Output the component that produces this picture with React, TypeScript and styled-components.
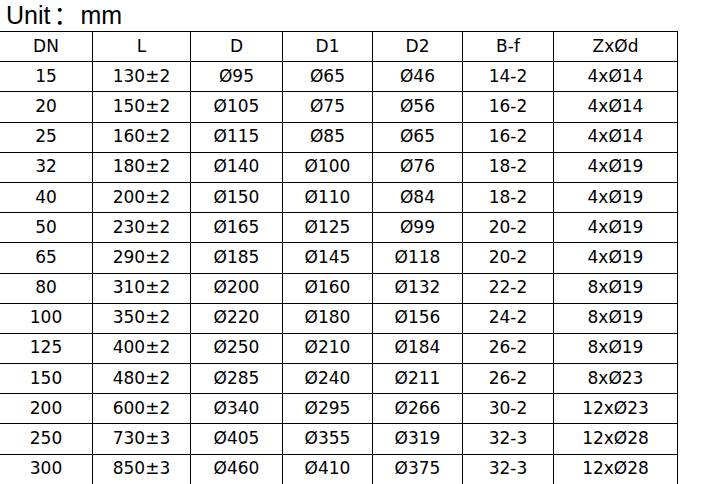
import React from "react";
import styled, { createGlobalStyle } from "styled-components";

const GlobalStyle = createGlobalStyle`
    html, body {
        margin: 0;
        padding: 0;
        background: #ffffff;
    }
    body {
        width: 708px;
        height: 484px;
        overflow: hidden;
    }
`;

const headers = ["DN", "L", "D", "D1", "D2", "B-f", "ZxØd"];
const columnWidths = [93, 98, 92, 90, 90, 91, 124];

const rows: string[][] = [
    ["15", "130±2", "Ø95", "Ø65", "Ø46", "14-2", "4xØ14"],
    ["20", "150±2", "Ø105", "Ø75", "Ø56", "16-2", "4xØ14"],
    ["25", "160±2", "Ø115", "Ø85", "Ø65", "16-2", "4xØ14"],
    ["32", "180±2", "Ø140", "Ø100", "Ø76", "18-2", "4xØ19"],
    ["40", "200±2", "Ø150", "Ø110", "Ø84", "18-2", "4xØ19"],
    ["50", "230±2", "Ø165", "Ø125", "Ø99", "20-2", "4xØ19"],
    ["65", "290±2", "Ø185", "Ø145", "Ø118", "20-2", "4xØ19"],
    ["80", "310±2", "Ø200", "Ø160", "Ø132", "22-2", "8xØ19"],
    ["100", "350±2", "Ø220", "Ø180", "Ø156", "24-2", "8xØ19"],
    ["125", "400±2", "Ø250", "Ø210", "Ø184", "26-2", "8xØ19"],
    ["150", "480±2", "Ø285", "Ø240", "Ø211", "26-2", "8xØ23"],
    ["200", "600±2", "Ø340", "Ø295", "Ø266", "30-2", "12xØ23"],
    ["250", "730±3", "Ø405", "Ø355", "Ø319", "32-3", "12xØ28"],
    ["300", "850±3", "Ø460", "Ø410", "Ø375", "32-3", "12xØ28"],
];

export default function App() {
    return (
        <Page>
            <GlobalStyle />
            <Title>
                Unit<Colon>：</Colon>mm
            </Title>
            <SizeTable>
                <colgroup>
                    {columnWidths.map((w, i) => (
                        <col key={i} style={{ width: w }} />
                    ))}
                </colgroup>
                <thead>
                    <Row>
                        {headers.map(h => (
                            <Cell as="th" key={h}>
                                {h}
                            </Cell>
                        ))}
                    </Row>
                </thead>
                <tbody>
                    {rows.map(r => (
                        <Row key={r[0]}>
                            {r.map((v, i) => (
                                <Cell key={i}>{v}</Cell>
                            ))}
                        </Row>
                    ))}
                </tbody>
            </SizeTable>
        </Page>
    );
}

const Page = styled.div`
    width: 708px;
    height: 484px;
    overflow: hidden;
    background: #ffffff;
`;

const Title = styled.div`
    height: 31px;
    box-sizing: border-box;
    padding-left: 6px;
    padding-top: 1px;
    font-family: "Liberation Sans", "Noto Sans CJK SC", sans-serif;
    font-size: 25px;
    line-height: 28px;
    color: #000000;
    white-space: nowrap;
    overflow: visible;
`;

const Colon = styled.span`
    display: inline-block;
    width: 30px;
    padding-left: 3px;
    box-sizing: border-box;
`;

const SizeTable = styled.table`
    margin-left: -1px;
    width: 678px;
    table-layout: fixed;
    border-collapse: collapse;
    font-family: "DejaVu Sans", "Noto Sans", sans-serif;
    font-size: 17px;
    color: #000000;
`;

const Row = styled.tr`
    height: 30.2px;
`;

const Cell = styled.td`
    border: 1px solid #000000;
    padding: 0 0 2px 0;
    text-align: center;
    vertical-align: middle;
    font-weight: normal;
    white-space: nowrap;
`;
